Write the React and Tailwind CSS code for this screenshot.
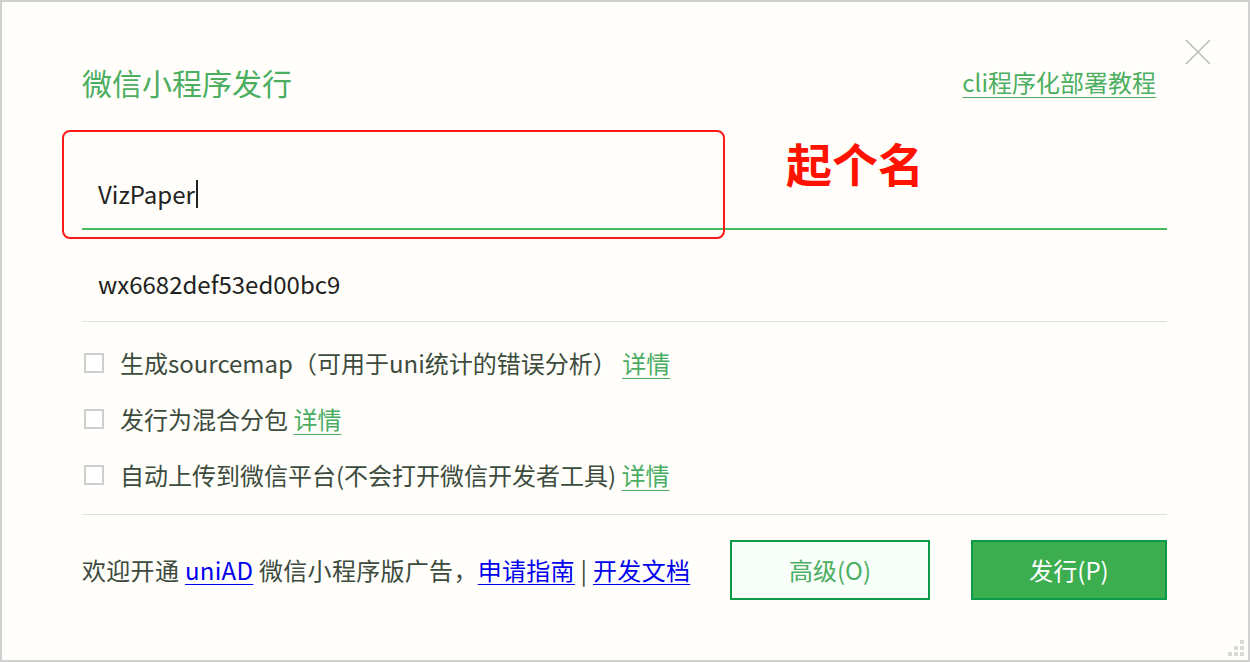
import React from 'react';

const font = { fontFamily: '"Noto Sans CJK SC", "Noto Sans", sans-serif' };

function Check({ children }) {
  return (
    <label className="flex items-center h-[56px] text-[24px] text-[#3d4b3d]">
      <span className="block w-[20px] h-[20px] min-w-[20px] border-2 border-[#cfcfcf] bg-white mr-[16px]" />
      <span>{children}</span>
    </label>
  );
}

function Detail() {
  return <a className="text-[#4aad62] underline underline-offset-[5px] decoration-1">详情</a>;
}

export default function App() {
  return (
    <div style={font} className="relative w-[1250px] h-[662px] border-2 border-[#d0d0d0] bg-[#fffefa] overflow-hidden">
      {/* close */}
      <svg className="absolute left-[1182px] top-[36px]" width="28" height="28" viewBox="0 0 28 28">
        <path d="M2 2 L26 26 M26 2 L2 26" stroke="#bdbdbd" strokeWidth="1.6" />
      </svg>

      <div className="pl-[80px] pr-[81px]">
        <div className="flex items-center justify-between h-[84px] pt-[38px] box-content">
          <h1 className="text-[30px] text-[#4cae5f] font-normal leading-none">微信小程序发行</h1>
          <a className="text-[24px] text-[#4cae5f] underline underline-offset-[5px] decoration-1 leading-none mr-[11px]">cli程序化部署教程</a>
        </div>

        <div className="h-[106px] flex items-end border-b-2 border-[#44bb5a]">
          <div className="h-[68px] flex items-center pl-[16px] text-[24px] text-[#222]">
            VizPaper<span className="inline-block w-[2px] h-[28px] bg-[#222] ml-[1px]" />
          </div>
        </div>

        <div className="h-[92px] flex items-center pt-[16px] pl-[16px] text-[24px] text-[#222] border-b border-[#e0e0e0]">
          wx6682def53ed00bc9
        </div>

        <div className="pt-[13px] pb-[11px] pl-[2px] border-b border-[#e0e0e0]">
          <Check>生成sourcemap（可用于uni统计的错误分析） <Detail /></Check>
          <Check>发行为混合分包 <Detail /></Check>
          <Check>自动上传到微信平台(不会打开微信开发者工具) <Detail /></Check>
        </div>

        <div className="flex items-center h-[110px]">
          <div className="flex-1 text-[24px] text-[#3d4b3d] whitespace-nowrap tracking-[0.3px]">
            欢迎开通 <a className="text-[#0000ee] underline underline-offset-[4px] decoration-1">uniAD</a> 微信小程序版广告，<a className="text-[#0000ee] underline underline-offset-[4px] decoration-1">申请指南</a> | <a className="text-[#0000ee] underline underline-offset-[4px] decoration-1">开发文档</a>
          </div>
          <button className="w-[200px] h-[60px] border-2 border-[#0a9a48] bg-[#f8fffb] text-[#4cae5f] text-[24px] mr-[41px]">高级(O)</button>
          <button className="w-[196px] h-[60px] border-2 border-[#0a9a48] bg-[#3cae50] text-white text-[24px]">发行(P)</button>
        </div>
      </div>

      {/* annotation */}
      <div className="absolute left-[60px] top-[128px] w-[663px] h-[109px] border-2 border-[#ff1a1a] rounded-[8px]" />
      <div className="absolute left-[784px] top-[137px] text-[46px] font-bold text-[#ff1200] leading-none">起个名</div>

      {/* resize grip */}
      <div className="absolute right-[4px] bottom-[4px] grid grid-cols-3 gap-[2px]">
        <span className="w-[4px] h-[4px]" />
        <span className="w-[4px] h-[4px]" />
        <span className="w-[4px] h-[4px] bg-[#d8d8d8]" />
        <span className="w-[4px] h-[4px]" />
        <span className="w-[4px] h-[4px] bg-[#d8d8d8]" />
        <span className="w-[4px] h-[4px] bg-[#d8d8d8]" />
        <span className="w-[4px] h-[4px] bg-[#d8d8d8]" />
        <span className="w-[4px] h-[4px] bg-[#d8d8d8]" />
        <span className="w-[4px] h-[4px] bg-[#d8d8d8]" />
      </div>
    </div>
  );
}
